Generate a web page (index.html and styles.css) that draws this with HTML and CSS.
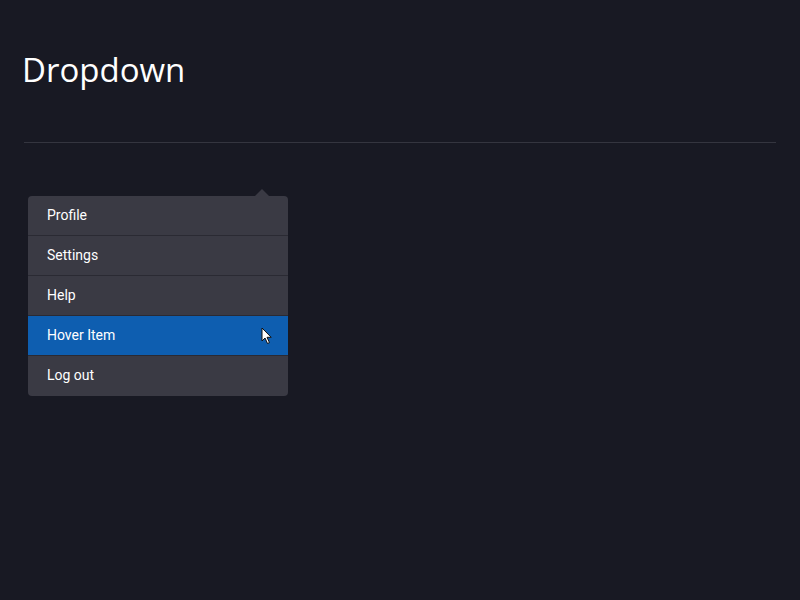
FILE: index.html
```html
<!DOCTYPE html>
<html lang="en">
<head>
    <meta charset="UTF-8">
    <meta name="viewport" content="width=device-width, initial-scale=1.0">
    <title>Dropdown</title>
    <link rel="stylesheet" href="styles.css">
</head>
<body>
    <div class="page">
        <h1>Dropdown</h1>
        <hr class="divider">
        <div class="dropdown">
            <ul class="menu">
                <li class="menu-item">Profile</li>
                <li class="menu-item">Settings</li>
                <li class="menu-item">Help</li>
                <li class="menu-item active">
                    Hover Item
                    <svg class="cursor" width="12" height="18" viewBox="0 0 12 18">
                        <path d="M1 1 L1 14 L4 11 L6.5 16.5 L8.5 15.6 L6 10.3 L10.2 10.3 Z" fill="#fff" stroke="#111" stroke-width="1"/>
                    </svg>
                </li>
                <li class="menu-item">Log out</li>
            </ul>
        </div>
    </div>
</body>
</html>
```

FILE: styles.css
```css
* {
    margin: 0;
    padding: 0;
    box-sizing: border-box;
}

body {
    background: #181923;
    color: #fff;
    font-family: 'Open Sans', 'Noto Sans', sans-serif;
    width: 800px;
    height: 600px;
    overflow: hidden;
}

.page {
    padding: 47px 24px 0 24px;
}

h1 {
    font-weight: 400;
    font-size: 33px;
    line-height: 46px;
    margin-left: -2px;
    color: #fff;
}

.divider {
    border: none;
    height: 1px;
    background: #34353f;
    margin-top: 49px;
}

.dropdown {
    position: relative;
    width: 260px;
    margin: 53px 0 0 4px;
}

.dropdown::before {
    content: '';
    position: absolute;
    top: -7px;
    left: 227px;
    border-left: 7px solid transparent;
    border-right: 7px solid transparent;
    border-bottom: 7px solid #3a3a44;
}

.menu {
    list-style: none;
    background: #3a3a44;
    border-radius: 4px;
    overflow: hidden;
    font-family: Roboto, 'Liberation Sans', sans-serif;
    font-size: 14px;
}

.menu-item {
    position: relative;
    height: 40px;
    line-height: 38px;
    padding-left: 19px;
    border-bottom: 1px solid #2a2a33;
}

.menu-item:last-child {
    border-bottom: none;
}

.menu-item.active {
    background: #0e5eb0;
}

.cursor {
    position: absolute;
    left: 233px;
    top: 11px;
}
```
